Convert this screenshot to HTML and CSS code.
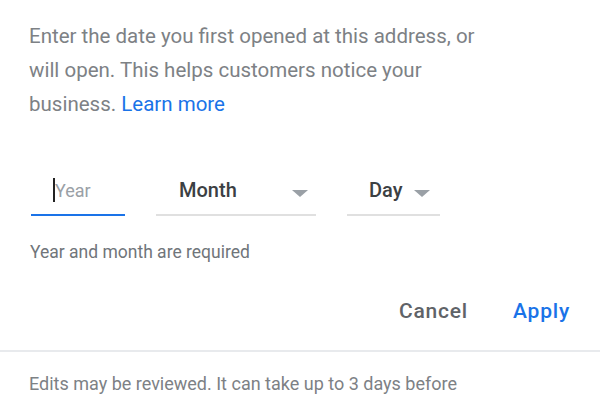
FILE: index.html
```html
<!DOCTYPE html>
<html>
<head>
    <title>Opening date</title>
    <link rel="stylesheet" href="styles.css">
</head>
<body>
    <div class="dialog">
        <p class="intro">Enter the date you first opened at this address, or will open. This helps customers notice your business. <a href="#learn">Learn more</a></p>

        <!-- Date fields -->
        <div class="date-row">
            <div class="field field-year active">
                <span class="caret"></span><span class="placeholder">Year</span>
            </div>
            <div class="field field-month">
                <span class="value">Month</span>
                <span class="arrow"></span>
            </div>
            <div class="field field-day">
                <span class="value">Day</span>
                <span class="arrow"></span>
            </div>
        </div>
        <div class="helper">Year and month are required</div>

        <div class="actions">
            <button class="btn btn-cancel">Cancel</button>
            <button class="btn btn-apply">Apply</button>
        </div>
    </div>
    <div class="footer">
        <p>Edits may be reviewed. It can take up to 3 days before</p>
    </div>
</body>
</html>
```

FILE: styles.css
```css
body {
    font-family: Roboto, Arial, sans-serif;
    margin: 0;
    padding: 0;
    background-color: white;
    color: #7d8185;
}

.dialog {
    padding: 19px 30px 0 29px;
}

.intro {
    margin: 0;
    font-size: 20.5px;
    line-height: 34px;
    width: 460px;
}

.intro a {
    color: #1a73e8;
    text-decoration: none;
}

/* Date fields */
.date-row {
    display: flex;
    gap: 31px;
    margin-top: 49px;
    padding-left: 2px;
}

.field {
    display: flex;
    align-items: center;
    height: 46px;
    padding-bottom: 4px;
    border-bottom: 2px solid #e0e0e0;
    box-sizing: border-box;
    font-size: 20px;
}

.field-year {
    width: 94px;
    padding-left: 22px;
}

.field.active {
    border-bottom-color: #1a73e8;
}

.caret {
    display: inline-block;
    width: 2px;
    height: 24px;
    background-color: #222;
}

.placeholder {
    color: #9aa0a6;
    font-size: 18px;
}

.field-month {
    width: 160px;
    padding-left: 23px;
    padding-right: 8px;
}

.field-day {
    width: 93px;
    padding-left: 22px;
}

.value {
    color: #3c4043;
    font-weight: 500;
}

.field-month .value {
    flex: 1;
}

.field-day .value {
    margin-right: 11px;
}

.arrow {
    width: 0;
    height: 0;
    border-left: 8px solid transparent;
    border-right: 8px solid transparent;
    border-top: 7px solid #9aa0a6;
    margin-top: 6px;
}

.helper {
    margin-top: 26px;
    font-size: 17.5px;
    color: #70757a;
    padding-left: 1px;
}

.actions {
    display: flex;
    justify-content: flex-end;
    gap: 45px;
    margin-top: 37px;
    padding-bottom: 27px;
}

.btn {
    background: none;
    border: none;
    padding: 0;
    font-family: Roboto, Arial, sans-serif;
    font-size: 21px;
    font-weight: 500;
    letter-spacing: 0.8px;
    cursor: pointer;
}

.btn-cancel {
    color: #5f6368;
}

.btn-apply {
    color: #1a73e8;
}

.footer {
    border-top: 2px solid #e8eaed;
    padding: 21px 29px 0;
}

.footer p {
    margin: 0;
    font-size: 18px;
}
```
